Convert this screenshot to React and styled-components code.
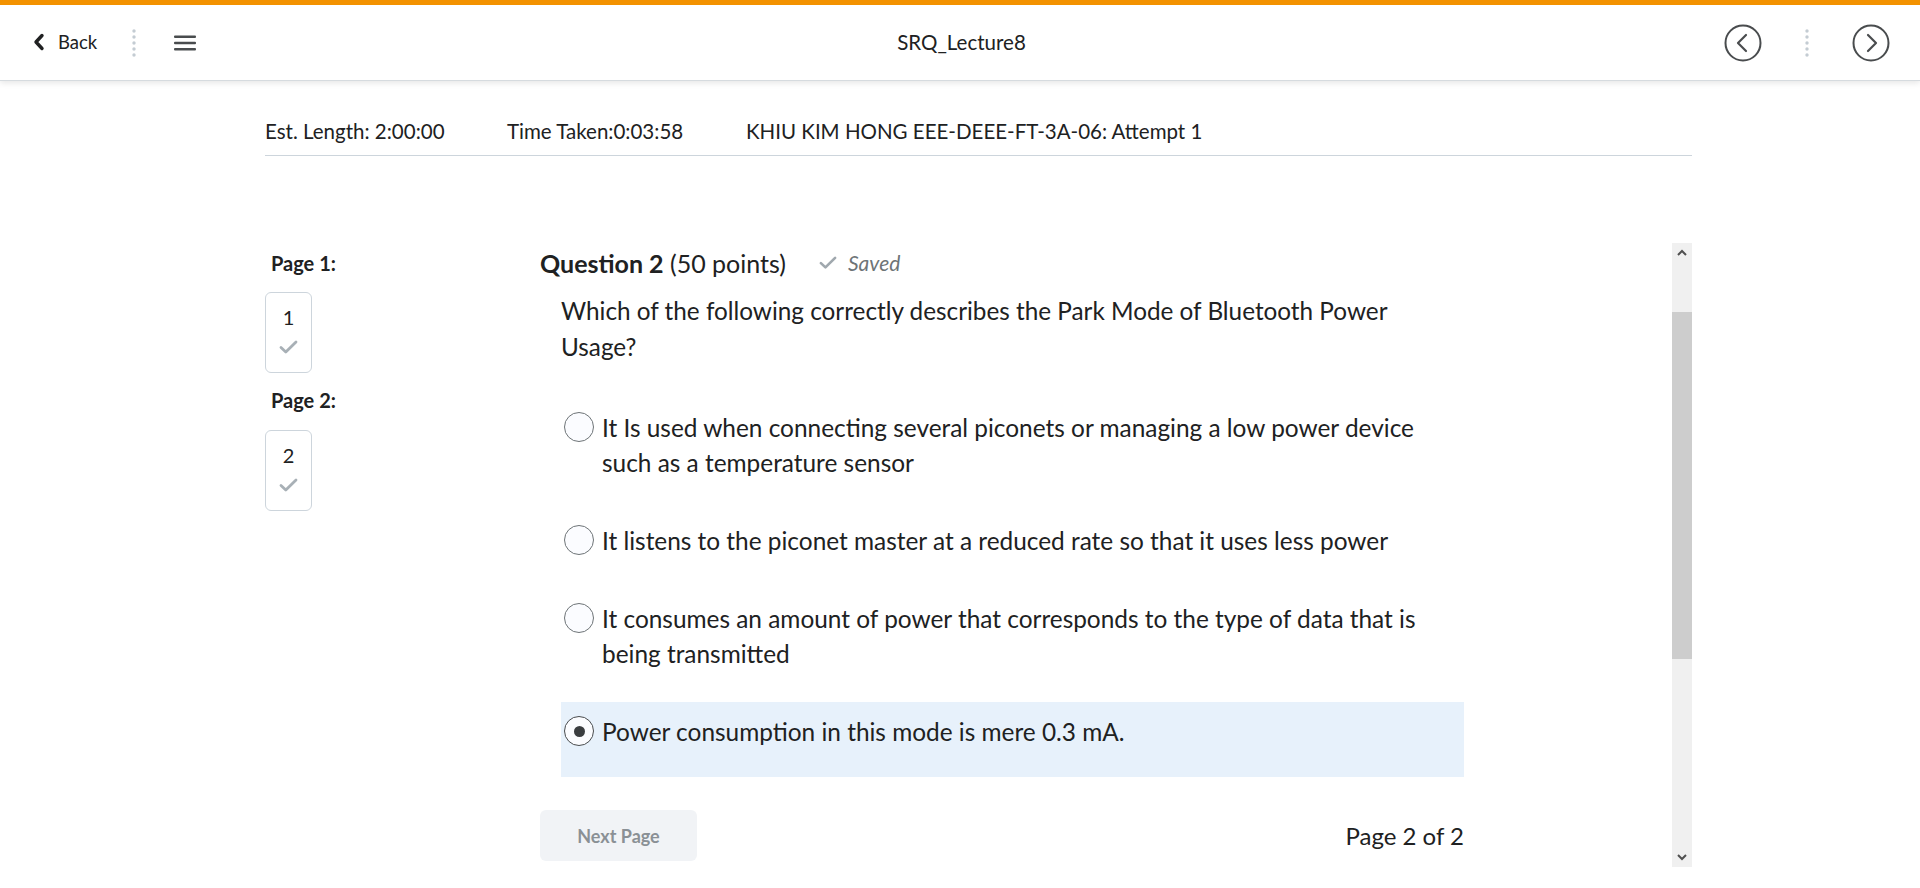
import styled, { createGlobalStyle } from "styled-components";

const GlobalStyle = createGlobalStyle`
  html, body {
    margin: 0;
    padding: 0;
    background: #ffffff;
  }
  body {
    font-family: Lato, "Liberation Sans", sans-serif;
    color: #202122;
    overflow: hidden;
  }
  * { box-sizing: border-box; }
`;

const TopBar = styled.header`
  height: 81px;
  border-top: 5px solid #f39200;
  border-bottom: 1px solid #d6dbdf;
  box-shadow: 0 2px 6px rgba(0, 0, 0, 0.1);
  background: #fff;
  display: grid;
  grid-template-columns: 1fr auto 1fr;
  align-items: center;
  padding: 0 30px 0 33px;
`;

const BarGroup = styled.div`
  display: flex;
  align-items: center;
  justify-content: ${(p) => (p.end ? "flex-end" : "flex-start")};
  gap: ${(p) => p.gap || 0}px;
`;

const BackLink = styled.button`
  display: flex;
  align-items: center;
  gap: 13px;
  border: 0;
  background: none;
  padding: 0 0 2px;
  font-family: inherit;
  font-size: 18.5px;
  color: #202122;
  cursor: pointer;
`;

const Title = styled.div`
  font-size: 20.5px;
  color: #202122;
  padding-bottom: 2px;
`;

const IconButton = styled.button`
  border: 0;
  background: none;
  padding: 0;
  display: flex;
  align-items: center;
  cursor: pointer;
`;

const Page = styled.main`
  margin-left: 265px;
  width: 1427px;
`;

const InfoBar = styled.div`
  display: flex;
  padding: 38px 0 12px;
  border-bottom: 1px solid #cdd5dc;
  font-size: 20.5px;
  line-height: 24px;
  color: #202122;
`;

const InfoItem = styled.span`
  width: ${(p) => p.w}px;
  flex: none;
`;

const Body = styled.div`
  margin-top: 87px;
  height: 624px;
  display: flex;
`;

const Nav = styled.nav`
  width: 275px;
  flex: none;
  padding-top: 6px;
`;

const NavLabel = styled.div`
  font-weight: 700;
  font-size: 20px;
  line-height: 28px;
  padding-left: 6px;
  margin-top: ${(p) => p.mt || 0}px;
`;

const PageBox = styled.div`
  width: 47px;
  height: 81px;
  margin-top: ${(p) => p.mt}px;
  border: 1px solid #cdd5dc;
  border-radius: 6px;
  display: flex;
  flex-direction: column;
  align-items: center;
  gap: 10px;
  padding-top: 11px;
  font-size: 20px;
  line-height: 26px;
`;

const Question = styled.section`
  width: 924px;
  flex: none;
  padding-top: 5px;
`;

const Heading = styled.h2`
  margin: 0;
  display: flex;
  align-items: center;
  font-size: 25px;
  font-weight: 400;
  line-height: 30px;
  b { font-weight: 700; }
`;

const Saved = styled.span`
  display: flex;
  align-items: center;
  gap: 11px;
  margin-left: 33px;
  font-size: 21px;
  font-style: italic;
  color: #6e7477;
`;

const Prompt = styled.p`
  margin: 15px 30px 0 21px;
  font-size: 24.3px;
  line-height: 36px;
`;

const Options = styled.div`
  margin: 33px 0 0 21px;
  display: flex;
  flex-direction: column;
  gap: 3px;
`;

const Option = styled.label`
  display: flex;
  align-items: flex-start;
  gap: 8px;
  padding: 12px 30px 28px 3px;
  font-size: 24.4px;
  line-height: 35px;
  background: ${(p) => (p.selected ? "#e7f1fb" : "transparent")};
`;

const Radio = styled.span`
  width: 30px;
  height: 30px;
  flex: none;
  margin-top: 2px;
  border-radius: 50%;
  border: 1px solid ${(p) => (p.checked ? "#494c4e" : "#6e7477")};
  background: #fbfcff;
  display: flex;
  align-items: center;
  justify-content: center;
  &::after {
    content: "";
    width: 11px;
    height: 11px;
    border-radius: 50%;
    background: #3a3d40;
    display: ${(p) => (p.checked ? "block" : "none")};
  }
`;

const Footer = styled.div`
  margin-top: 33px;
  display: flex;
  align-items: center;
  justify-content: space-between;
`;

const NextButton = styled.button`
  width: 157px;
  height: 51px;
  border: 0;
  border-radius: 6px;
  background: #f1f3f6;
  color: #8a9095;
  font-family: inherit;
  font-weight: 700;
  font-size: 18px;
`;

const PageCount = styled.span`
  font-size: 24px;
`;

const Spacer = styled.div`
  flex: 1;
`;

const Scrollbar = styled.div`
  width: 20px;
  flex: none;
  background: #f0f0f0;
  display: flex;
  flex-direction: column;
`;

const ScrollArrow = styled.div`
  height: 20px;
  flex: none;
  display: flex;
  align-items: center;
  justify-content: center;
`;

const Track = styled.div`
  flex: 1;
`;

const Thumb = styled.div`
  margin-top: 49px;
  height: 347px;
  background: #cdcdcd;
`;

const Dots = () => (
  <svg width="6" height="30" viewBox="0 0 6 30">
    {[3, 9, 15, 21, 27].map((y) => (
      <circle key={y} cx="3" cy={y} r="1.7" fill="#c4ccd3" />
    ))}
  </svg>
);

const Check = ({ width = 19, color = "#a8b0b6" }) => (
  <svg width={width} height={(width * 14) / 19} viewBox="0 0 19 14">
    <path d="M2 7.5 L6.8 12 L17 2" fill="none" stroke={color} strokeWidth="2.8" strokeLinecap="round" strokeLinejoin="round" />
  </svg>
);

const CircleArrow = ({ dir }) => (
  <svg width="38" height="38" viewBox="0 0 38 38">
    <circle cx="19" cy="19" r="17.5" fill="none" stroke="#494c4e" strokeWidth="2" />
    <path
      d={dir === "left" ? "M22 11 L14 19 L22 27" : "M16 11 L24 19 L16 27"}
      fill="none"
      stroke="#494c4e"
      strokeWidth="2.2"
      strokeLinecap="round"
      strokeLinejoin="round"
    />
  </svg>
);

const options = [
  "It Is used when connecting several piconets or managing a low power device such as a temperature sensor",
  "It listens to the piconet master at a reduced rate so that it uses less power",
  "It consumes an amount of power that corresponds to the type of data that is being transmitted",
  "Power consumption in this mode is mere 0.3 mA.",
];

const App = () => {
  const selected = 3;

  return (
    <>
      <GlobalStyle />
      <TopBar>
        <BarGroup gap={0}>
          <BackLink>
            <svg width="12" height="18" viewBox="0 0 12 18">
              <path d="M9 2.5 L3 9 L9 15.5" fill="none" stroke="#202122" strokeWidth="3.4" strokeLinecap="round" strokeLinejoin="round" />
            </svg>
            Back
          </BackLink>
          <span style={{ width: 34 }} />
          <Dots />
          <span style={{ width: 36 }} />
          <IconButton>
            <svg width="24" height="18" viewBox="0 0 24 18">
              <rect x="1" y="1.5" width="22" height="2.4" rx="1" fill="#494c4e" />
              <rect x="1" y="7.8" width="22" height="2.4" rx="1" fill="#494c4e" />
              <rect x="1" y="14.1" width="22" height="2.4" rx="1" fill="#494c4e" />
            </svg>
          </IconButton>
        </BarGroup>
        <Title>SRQ_Lecture8</Title>
        <BarGroup end gap={42}>
          <IconButton><CircleArrow dir="left" /></IconButton>
          <Dots />
          <IconButton><CircleArrow dir="right" /></IconButton>
        </BarGroup>
      </TopBar>

      <Page>
        <InfoBar>
          <InfoItem w={242}>Est. Length: 2:00:00</InfoItem>
          <InfoItem w={239}>Time Taken:0:03:58</InfoItem>
          <span>KHIU KIM HONG EEE-DEEE-FT-3A-06: Attempt 1</span>
        </InfoBar>

        <Body>
          <Nav>
            <NavLabel>Page 1:</NavLabel>
            <PageBox mt={15}>
              1
              <Check />
            </PageBox>
            <NavLabel mt={13}>Page 2:</NavLabel>
            <PageBox mt={16}>
              2
              <Check />
            </PageBox>
          </Nav>

          <Question>
            <Heading>
              <b>Question 2</b>&nbsp;(50 points)
              <Saved>
                <Check width={18} color="#a0a8ae" />
                Saved
              </Saved>
            </Heading>
            <Prompt>
              Which of the following correctly describes the Park Mode of Bluetooth Power Usage?
            </Prompt>
            <Options>
              {options.map((text, i) => (
                <Option key={i} selected={i === selected}>
                  <Radio checked={i === selected} />
                  <span>{text}</span>
                </Option>
              ))}
            </Options>
            <Footer>
              <NextButton disabled>Next Page</NextButton>
              <PageCount>Page 2 of 2</PageCount>
            </Footer>
          </Question>

          <Spacer />

          <Scrollbar>
            <ScrollArrow>
              <svg width="10" height="8" viewBox="0 0 10 8">
                <path d="M1 6 L5 2 L9 6" fill="none" stroke="#505050" strokeWidth="2" />
              </svg>
            </ScrollArrow>
            <Track>
              <Thumb />
            </Track>
            <ScrollArrow>
              <svg width="10" height="8" viewBox="0 0 10 8">
                <path d="M1 2 L5 6 L9 2" fill="none" stroke="#505050" strokeWidth="2" />
              </svg>
            </ScrollArrow>
          </Scrollbar>
        </Body>
      </Page>
    </>
  );
};

export default App;
